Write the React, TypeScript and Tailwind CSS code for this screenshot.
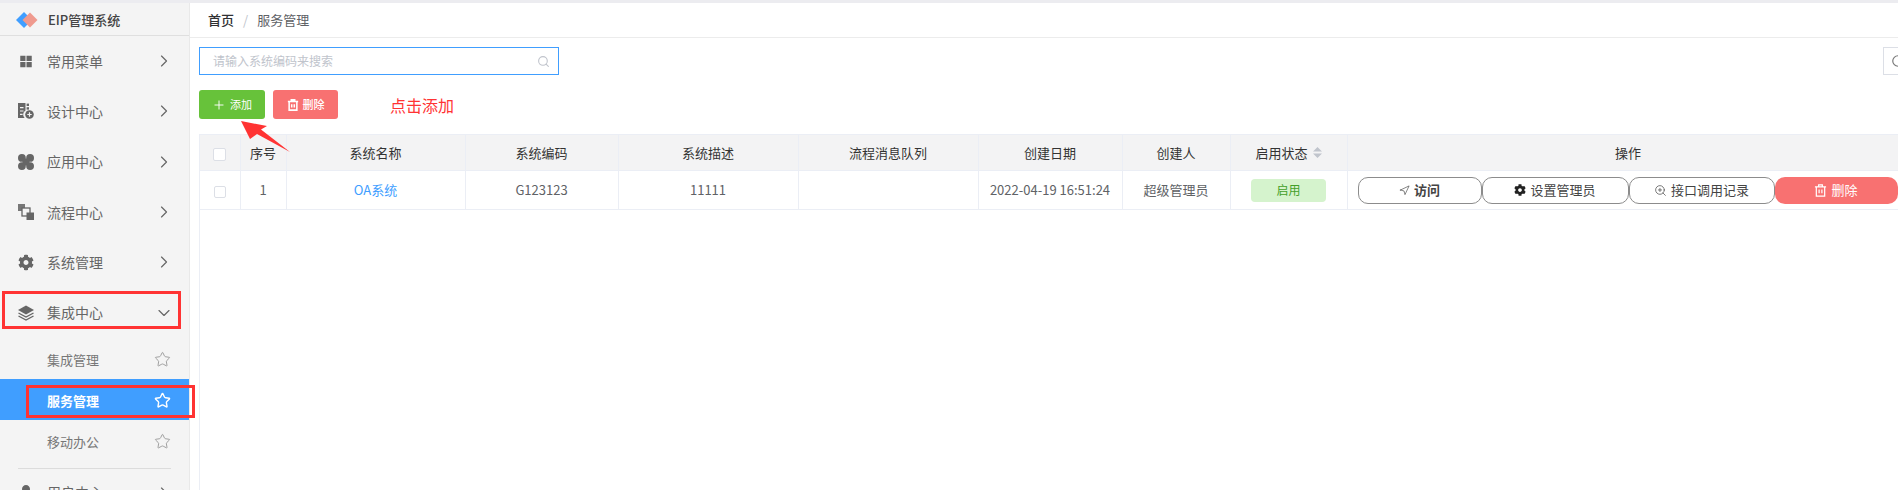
import React from "react";
import { ChevronRight, ChevronDown, Star, Plus, Search, RotateCw, Navigation, ZoomIn } from "lucide-react";
import { AiFillAppstore } from "react-icons/ai";
import { FaCog, FaUser } from "react-icons/fa";

const font = { fontFamily: '"Noto Sans CJK SC", "Noto Sans", sans-serif' };

function FileAddIcon() {
  return (
    <svg viewBox="0 0 16 16" className="w-4 h-4 fill-[#666666]">
      <path d="M0 0h7.5v7.6A4.6 4.6 0 0 0 6.6 15H0z" />
      <rect x="8.6" y="0.6" width="2.4" height="2.4" />
      <rect x="8.6" y="4.2" width="2.4" height="2.4" />
      <circle cx="11.5" cy="11.5" r="4.3" />
      <path d="M2 4h3.5v1.2H2zM2 7.4h3.5v1.2H2zM2 10.8h2.6V12H2z" fill="#f4f4f4" />
      <path d="M10.9 9.3h1.2v1.6h1.6v1.2h-1.6v1.6h-1.2v-1.6H9.3v-1.2h1.6z" fill="#f4f4f4" />
    </svg>
  );
}
function CloverIcon() {
  return (
    <svg viewBox="0 0 16 16" className="w-4 h-4 fill-[#666666]">
      <circle cx="3.9" cy="3.9" r="3.9" />
      <circle cx="12.1" cy="3.9" r="3.9" />
      <circle cx="3.9" cy="12.1" r="3.9" />
      <circle cx="12.1" cy="12.1" r="3.9" />
      <rect x="4.5" y="4.5" width="7" height="7" />
    </svg>
  );
}
function FlowIcon() {
  return (
    <svg viewBox="0 0 16 16" className="w-4 h-4">
      <rect x="0" y="0" width="7" height="7" fill="#777777" />
      <rect x="4" y="4" width="8" height="8" fill="#f4f4f4" stroke="#666666" strokeWidth="1.3" />
      <rect x="8.5" y="8.5" width="7.5" height="7.5" fill="#666666" />
    </svg>
  );
}
function LayersIcon() {
  return (
    <svg viewBox="0 0 16 16" className="w-4 h-4">
      <path d="M8 0.5L16 5L8 9.5L0 5z" fill="#666666" />
      <path d="M0.5 8L8 12L15.5 8M0.5 11L8 15L15.5 11" fill="none" stroke="#666666" strokeWidth="1.4" />
    </svg>
  );
}
function TrashIcon({ size, sw }: { size: number; sw: number }) {
  return (
    <svg width={size} height={size} viewBox="0 0 14 14" fill="none" stroke="currentColor" strokeWidth={sw}>
      <path d="M1 3h12M5 3V1h4v2M2.5 3v10h9V3M5.5 6v4M8.5 6v4" />
    </svg>
  );
}

type MenuProps = { icon: React.ReactNode; label: string; open?: boolean };
function MenuRow({ icon, label, open }: MenuProps) {
  return (
    <div className="h-[50.3px] shrink-0 flex items-center pl-[18px] pr-[15px] text-[14px] text-[#666666]">
      <span className="w-[16px] h-[16px] flex items-center justify-center shrink-0">{icon}</span>
      <span className="ml-[13px] flex-1">{label}</span>
      {open ? <ChevronDown size={20} strokeWidth={1.4} /> : <ChevronRight size={20} strokeWidth={1.4} />}
    </div>
  );
}
function SubRow({ label, active }: { label: string; active?: boolean }) {
  return (
    <div
      className={
        "h-[41px] shrink-0 flex items-center pl-[47px] pr-[18px] text-[13px] pt-[3px] " +
        (active ? "bg-[#409eff] text-white font-bold" : "text-[#777777]")
      }
    >
      <span className="flex-1">{label}</span>
      <Star size={17} strokeWidth={active ? 2 : 1.3} className={active ? "text-white" : "text-[#999999]"} />
    </div>
  );
}

const cols = [40, 46, 179, 153, 180, 180, 144, 108, 117, 562];
const heads = ["", "序号", "系统名称", "系统编码", "系统描述", "流程消息队列", "创建日期", "创建人", "启用状态", "操作"];
const cellLine = "border-r border-b border-[#ebeef5] p-0 text-center";

function OutlineBtn({ icon, label, bold, w }: { icon: React.ReactNode; label: string; bold?: boolean; w: string }) {
  return (
    <button className={"h-[27px] shrink-0 rounded-[10px] border border-[#8c8c8c] bg-white flex items-center justify-center gap-[4px] text-[13px] text-[#444444] " + w + (bold ? " font-bold" : "")}>
      {icon}
      {label}
    </button>
  );
}

export default function App() {
  return (
    <div className="relative w-[1898px] h-[490px] overflow-hidden bg-white flex flex-col" style={font}>
      <div className="h-[3px] bg-[#ececf0] shrink-0" />
      <div className="flex flex-1 min-h-0">
        <aside className="w-[190px] shrink-0 bg-[#f4f4f4] border-r border-[#e9e9e9] flex flex-col overflow-hidden">
          <div className="h-[33px] shrink-0 border-b border-[#dfdfdf] flex items-center pl-[16px] pt-[2px]">
            <svg width="22" height="16" viewBox="0 0 22 16">
              <path d="M8 0l8 8-8 8-8-8z" fill="#409eff" />
              <path d="M14 0.5l7.5 7.5-7.5 7.5-7.5-7.5z" fill="#ef9a8e" />
            </svg>
            <span className="ml-[10px] text-[13px] font-medium text-[#444444]">EIP管理系统</span>
          </div>
          <MenuRow icon={<AiFillAppstore size={17} />} label="常用菜单" />
          <MenuRow icon={<FileAddIcon />} label="设计中心" />
          <MenuRow icon={<CloverIcon />} label="应用中心" />
          <MenuRow icon={<FlowIcon />} label="流程中心" />
          <MenuRow icon={<FaCog size={17} />} label="系统管理" />
          <MenuRow icon={<LayersIcon />} label="集成中心" open />
          <SubRow label="集成管理" />
          <SubRow label="服务管理" active />
          <SubRow label="移动办公" />
          <div className="mx-[18px] mt-[7px] border-t border-[#dcdcdc] shrink-0" />
          <div className="mt-[-1px]">
            <MenuRow icon={<FaUser size={16} />} label="用户中心" />
          </div>
        </aside>
        <main className="flex-1 min-w-0 flex flex-col overflow-hidden">
          <div className="h-[35px] shrink-0 border-b border-[#ececec] flex items-center pl-[18px] text-[13px]">
            <span className="text-[#303133] font-medium">首页</span>
            <span className="mx-[9px] text-[#c0c4cc]">/</span>
            <span className="text-[#606266]">服务管理</span>
          </div>
          <div className="flex-1 pl-[9px] flex flex-col min-h-0">
            <div className="flex justify-between mt-[9px]">
              <div className="w-[360px] h-[28px] border border-[#409eff] flex items-center pl-[13px] pr-[8px] text-[12px] text-[#c0c4cc]">
                <span className="flex-1">请输入系统编码来搜索</span>
                <Search size={13} />
              </div>
              <div className="w-[32px] h-[28px] -mr-[17px] border border-[#dcdfe6] flex items-center pl-[7px] overflow-hidden">
                <RotateCw size={14} className="text-[#777777] shrink-0" />
              </div>
            </div>
            <div className="flex gap-[8px] mt-[15px] items-center">
              <button className="w-[66px] h-[29px] rounded-[3px] bg-[#67c23a] text-white text-[11px] flex items-center justify-center gap-[4px]">
                <Plus size={14} strokeWidth={1.6} />
                添加
              </button>
              <button className="w-[65px] h-[29px] rounded-[3px] bg-[#f87171] text-white text-[11px] font-medium flex items-center justify-center gap-[4px]">
                <TrashIcon size={12} sw={1.8} />
                删除
              </button>
              <span className="ml-[44px] text-[16px] text-[#ff3333]">点击添加</span>
            </div>
            <div className="mt-[15px] flex-1 border-l border-[#ebeef5] min-h-0">
              <table className="table-fixed w-[1709px] border-collapse text-[13px]">
                <colgroup>
                  {cols.map((c, i) => (
                    <col key={i} style={{ width: c }} />
                  ))}
                </colgroup>
                <thead>
                  <tr className="h-[36px] bg-[#f3f3f4] text-[#333333]">
                    {heads.map((h, i) => (
                      <th key={i} className={cellLine + " border-t font-normal"}>
                        {i === 0 ? (
                          <span className="inline-block w-[13px] h-[13px] border border-[#dcdfe6] bg-white rounded-[2px] align-middle" />
                        ) : i === 8 ? (
                          <span className="inline-flex items-center gap-[5px]">
                            {h}
                            <svg width="9" height="11" viewBox="0 0 9 11" className="fill-[#c0c4cc]">
                              <path d="M4.5 0l4.5 4.5H0zM4.5 11L0 6.5h9z" />
                            </svg>
                          </span>
                        ) : (
                          h
                        )}
                      </th>
                    ))}
                  </tr>
                </thead>
                <tbody>
                  <tr className="h-[39px] text-[#606266]">
                    <td className={cellLine}>
                      <span className="inline-block w-[12px] h-[12px] border border-[#dcdfe6] bg-white rounded-[2px] align-middle" />
                    </td>
                    <td className={cellLine}>1</td>
                    <td className={cellLine + " text-[#409eff]"}>OA系统</td>
                    <td className={cellLine}>G123123</td>
                    <td className={cellLine}>11111</td>
                    <td className={cellLine}></td>
                    <td className={cellLine}>2022-04-19 16:51:24</td>
                    <td className={cellLine}>超级管理员</td>
                    <td className={cellLine}>
                      <span className="inline-flex items-center justify-center w-[75px] h-[23px] rounded-[4px] bg-[#d5f3cd] text-[#43a02a] text-[12px]">启用</span>
                    </td>
                    <td className={cellLine}>
                      <div className="flex pl-[10px]">
                        <OutlineBtn w="w-[124px]" bold icon={<Navigation size={11} strokeWidth={1.4} />} label="访问" />
                        <OutlineBtn w="w-[147px]" icon={<FaCog size={12} className="text-[#222222]" />} label="设置管理员" />
                        <OutlineBtn w="w-[146px]" icon={<ZoomIn size={13} strokeWidth={1.3} />} label="接口调用记录" />
                        <button className="w-[123px] h-[27px] shrink-0 rounded-[10px] bg-[#f87171] text-white text-[13px] flex items-center justify-center gap-[4px]">
                          <TrashIcon size={13} sw={1.3} />
                          删除
                        </button>
                      </div>
                    </td>
                  </tr>
                </tbody>
              </table>
            </div>
          </div>
        </main>
      </div>

      {/* red annotations drawn over the page */}
      <div className="absolute left-[2px] top-[291px] w-[179px] h-[38px] border-[3px] border-[#ff3333]" />
      <div className="absolute left-[26px] top-[385px] w-[169px] h-[33px] border-[3px] border-[#ff3333]" />
      <svg className="absolute left-[238px] top-[118px]" width="56" height="38" viewBox="0 0 56 38">
        <path d="M3 3L29 8L23 11.5L52 34L19 16L12 21z" fill="#ff3333" />
      </svg>
    </div>
  );
}
